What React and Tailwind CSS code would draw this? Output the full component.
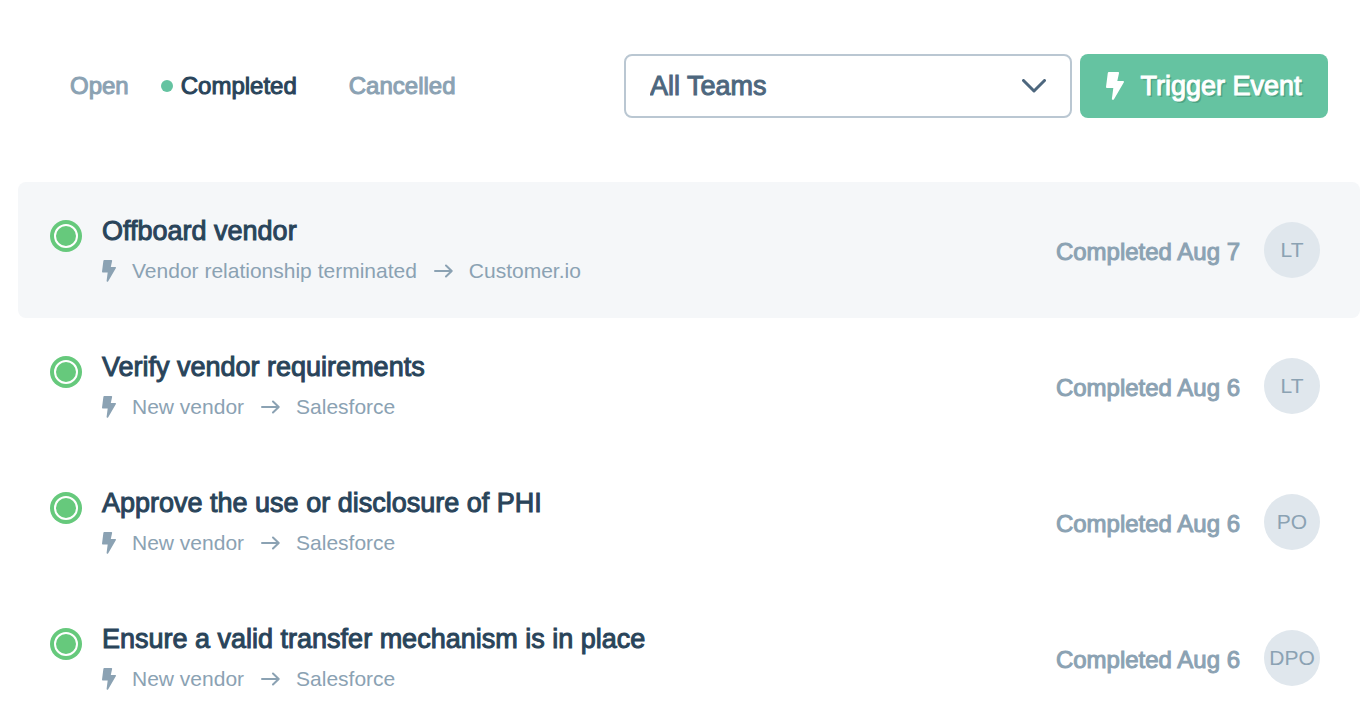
const tasks = [
  { title: 'Offboard vendor', event: 'Vendor relationship terminated', vendor: 'Customer.io', date: 'Aug 7', owner: 'LT', active: true },
  { title: 'Verify vendor requirements', event: 'New vendor', vendor: 'Salesforce', date: 'Aug 6', owner: 'LT' },
  { title: 'Approve the use or disclosure of PHI', event: 'New vendor', vendor: 'Salesforce', date: 'Aug 6', owner: 'PO' },
  { title: 'Ensure a valid transfer mechanism is in place', event: 'New vendor', vendor: 'Salesforce', date: 'Aug 6', owner: 'DPO' },
];

function Bolt({ className }) {
  return (
    <svg viewBox="0 0 18 28" fill="currentColor" className={className} aria-hidden="true">
      <path d="M2.800 0h9.300c.8 0 1.100.5.900 1.200L11.300 9h5.800c.8 0 1.100.6.800 1.300L8 27.200c-.7 1.200-2.300.8-2.100-.4L7.300 16H.9c-.6 0-.9-.4-.9-1L1.800.9C1.900.3 2.300 0 2.800 0z" />
    </svg>
  );
}

function Arrow() {
  return (
    <svg viewBox="0 0 20 14" fill="none" stroke="currentColor" strokeWidth="2" strokeLinecap="round" strokeLinejoin="round" className="mx-4 h-[14px] w-5 shrink-0" aria-hidden="true">
      <path d="M2 7h16.500M13 1.500l5.700 5.500-5.700 5.500" />
    </svg>
  );
}

function Task({ task }) {
  return (
    <li className={`flex h-[136px] items-start rounded-lg pr-10 pl-8 ${task.active ? 'bg-[#f5f7f9]' : 'bg-white'}`}>
      <svg viewBox="0 0 32 32" className="mt-[38px] mr-5 size-8 shrink-0" role="img" aria-label="Completed">
        <circle cx="16" cy="16" r="16" fill="#66c97c" />
        <circle cx="16" cy="16" r="11" fill="none" stroke="#fff" strokeWidth="2" />
      </svg>
      <div className="min-w-0 flex-1 pt-7">
        <h2 className="text-[27px] leading-[42px] text-[#29445a] [-webkit-text-stroke:1px_#29445a]">{task.title}</h2>
        <p className="flex items-center text-[21px] leading-[38px] text-[#8ba2b3]">
          <Bolt className="mr-4 h-[22px] w-[14px] shrink-0" />
          <span>{task.event}</span>
          <Arrow />
          <span>{task.vendor}</span>
        </p>
      </div>
      <div className="mt-10 flex h-14 items-center gap-6 text-[#8ba2b3]">
        <span className="pt-1 text-2xl [-webkit-text-stroke:1px_#8ba2b3]">Completed {task.date}</span>
        <span className="flex size-14 items-center justify-center rounded-full bg-[#e0e7ed] text-[21px]">{task.owner}</span>
      </div>
    </li>
  );
}

export default function App() {
  return (
    <main className="bg-white font-['Liberation_Sans',Arial,sans-serif]">
      <header className="flex items-center pt-[54px] pr-10 pb-16 pl-[70px]">
        <nav className="flex flex-1 items-center text-2xl text-[#8ba2b3]">
          <a href="#open" className="mr-8 [-webkit-text-stroke:1px_#8ba2b3]">Open</a>
          <a href="#completed" aria-current="page" className="mr-[52px] flex items-center gap-2 text-[#29445a] [-webkit-text-stroke:1px_#29445a]">
            <span className="size-3 rounded-full bg-[#65c3a1]" />
            Completed
          </a>
          <a href="#cancelled" className="[-webkit-text-stroke:1px_#8ba2b3]">Cancelled</a>
        </nav>
        <div className="grid w-[448px] items-center">
          <select aria-label="Team" defaultValue="all" className="col-start-1 row-start-1 h-16 w-full appearance-none rounded-lg border-2 border-[#bac7d2] bg-white pr-16 pl-6 text-[27px] text-[#4d677e] [-webkit-text-stroke:1px_#4d677e]">
            <option value="all">All Teams</option>
          </select>
          <svg viewBox="0 0 24 14" fill="none" stroke="#4d677e" strokeWidth="3" strokeLinecap="round" strokeLinejoin="round" className="pointer-events-none col-start-1 row-start-1 mr-[26px] h-[14px] w-6 justify-self-end" aria-hidden="true">
            <path d="M1.500 1.500 12 12 22.500 1.500" />
          </svg>
        </div>
        <button type="button" className="ml-2 flex h-16 w-[248px] items-center justify-center gap-4 rounded-lg bg-[#65c3a1] text-[27px] whitespace-nowrap text-white">
          <Bolt className="h-7 w-[18px] shrink-0" />
          <span className="[-webkit-text-stroke:1px_white] [text-shadow:2px_2px_0_#4fa585]">Trigger Event</span>
        </button>
      </header>
      <ul className="mr-2 ml-[18px]">
        {tasks.map((task) => <Task key={task.title} task={task} />)}
      </ul>
    </main>
  );
}
